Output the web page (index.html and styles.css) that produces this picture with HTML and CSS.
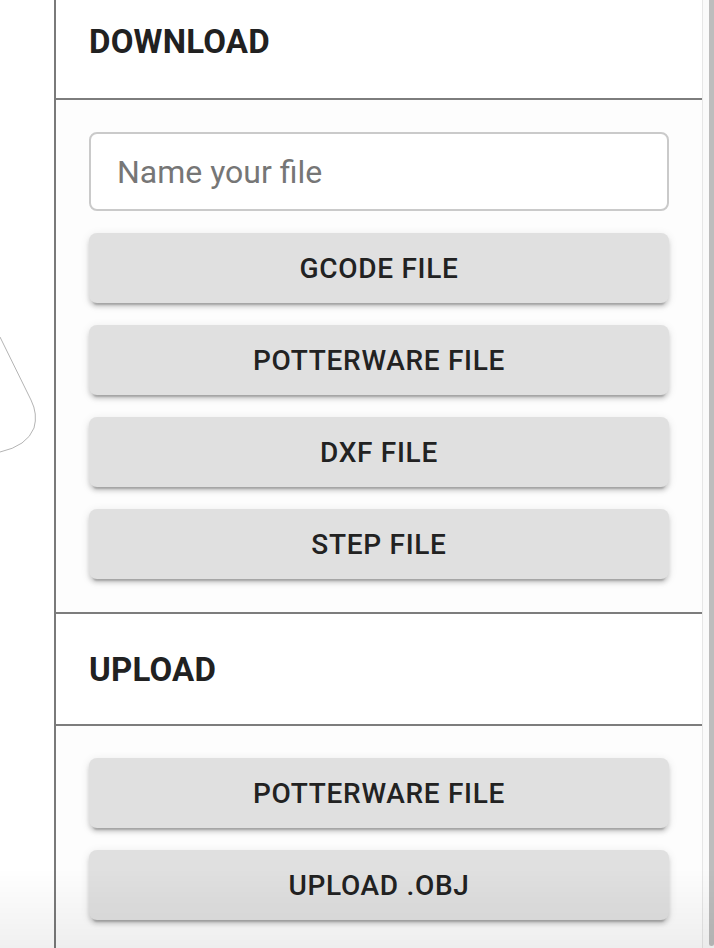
FILE: index.html
```html
<!DOCTYPE html>
<html lang="en">
<head>
  <meta charset="UTF-8" />
  <meta name="viewport" content="width=device-width, initial-scale=1.0"/>
  <title>Pottery Designer - Files</title>
  <link rel="stylesheet" href="styles.css">
</head>
<body>
  <div class="app">
    <div class="canvas">
      <svg width="54" height="948" viewBox="0 0 54 948">
        <path d="M0 337 L31 400 Q38 414 34 428 Q27 446 0 452" fill="none" stroke="#b4b4b4" stroke-width="1"/>
      </svg>
    </div>
    <aside class="panel">
      <div class="section-head first">
        <h2>DOWNLOAD</h2>
      </div>
      <div class="section-body">
        <input type="text" class="file-name" placeholder="Name your file">
        <button class="btn">GCODE FILE</button>
        <button class="btn">POTTERWARE FILE</button>
        <button class="btn">DXF FILE</button>
        <button class="btn">STEP FILE</button>
      </div>
      <div class="section-head">
        <h2>UPLOAD</h2>
      </div>
      <div class="section-body">
        <button class="btn">POTTERWARE FILE</button>
        <button class="btn">UPLOAD .OBJ</button>
      </div>
    </aside>
    <div class="scrollbar"><div class="thumb"></div></div>
  </div>
  <div class="fade"></div>
</body>
</html>
```

FILE: styles.css
```css
body {
  margin: 0;
  font-family: Roboto, "Liberation Sans", sans-serif;
  background: #fff;
  overflow: hidden;
}
.app {
  display: flex;
  height: 948px;
  overflow: hidden;
}
.canvas {
  width: 54px;
  flex: none;
}
.canvas svg {
  display: block;
}
.panel {
  width: 646px;
  flex: none;
  border-left: 2px solid #7a7a7a;
  border-right: 1px solid #e6e6e6;
  background: #fdfdfd;
}
.section-head {
  box-sizing: border-box;
  height: 112px;
  display: flex;
  align-items: center;
  padding: 0 33px;
  background: #fff;
  border-bottom: 2px solid #7d7d7d;
}
.section-head.first {
  margin-top: -12px;
  padding-bottom: 4px;
}
.section-head h2 {
  margin: 0;
  font-size: 33px;
  font-weight: 700;
  color: #212121;
  letter-spacing: 0.2px;
}
.section-body {
  display: flex;
  flex-direction: column;
  gap: 22px;
  padding: 32px 33px 33px;
  border-bottom: 2px solid #7d7d7d;
}
.section-body:last-child {
  border-bottom: none;
}
.file-name {
  box-sizing: border-box;
  height: 79px;
  padding: 0 26px;
  border: 2px solid #cacaca;
  border-radius: 8px;
  background: #fff;
  font-family: inherit;
  font-size: 32px;
  color: #333;
  outline: none;
}
.file-name::placeholder {
  color: #767676;
}
.btn {
  height: 70px;
  border: none;
  border-radius: 8px;
  background: #e0e0e0;
  color: #222;
  font-family: inherit;
  font-size: 28px;
  font-weight: 500;
  letter-spacing: 0.7px;
  cursor: pointer;
  box-shadow: 0 6px 2px -4px rgba(0,0,0,0.2), 0 4px 4px 0 rgba(0,0,0,0.14), 0 2px 10px 0 rgba(0,0,0,0.1);
}
.scrollbar {
  flex: 1;
  display: flex;
  justify-content: flex-end;
  background: #fafafa;
}
.thumb {
  width: 5px;
  height: 946px;
  background: #bdbdbd;
  border-radius: 0 0 3px 3px;
}
.fade {
  position: fixed;
  left: 0;
  right: 0;
  bottom: 0;
  height: 80px;
  pointer-events: none;
  background: linear-gradient(rgba(0,0,0,0), rgba(0,0,0,0.06));
}
```
